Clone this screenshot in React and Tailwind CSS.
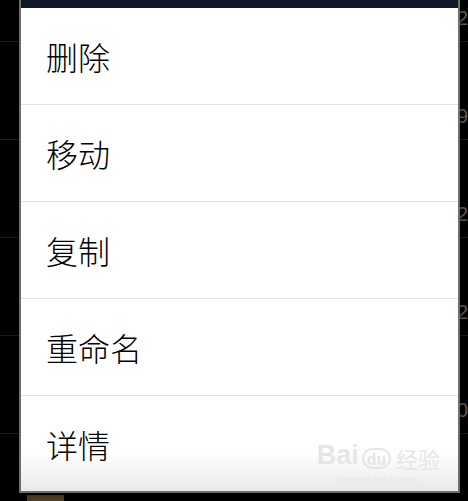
import React from 'react';

const items = ['删除', '移动', '复制', '重命名', '详情'];
const sideDigits = ['2', '9', '2', '2', '0'];

export default function App() {
  return (
    <div className="relative w-[468px] h-[501px] overflow-hidden bg-black" style={{ fontFamily: '"Noto Sans CJK SC", "Noto Sans", sans-serif' }}>
      {/* list behind the dialog */}
      <div className="flex flex-col pt-[41px]">
        {sideDigits.map((d, i) => (
          <div key={i} className="h-[98px] border-t border-[#1c1c1c]" />
        ))}
      </div>
      <div className="absolute left-[457px] top-0 flex flex-col">
        {sideDigits.map((d, i) => (
          <div key={i} className="h-[98px] pt-[8px] text-[20px] leading-none text-[#5a5a5a]" style={{ fontFamily: '"Liberation Sans", sans-serif' }}>
            {d}
          </div>
        ))}
      </div>
      <div className="absolute left-[27px] top-[495px] w-[37px] h-[6px] bg-[#4d3f24]" />

      {/* dialog */}
      <div className="absolute left-[19px] top-0 w-[441px] border-x-2 border-b-2 border-[#6e6e6e] bg-white shadow-[0_2px_4px_rgba(0,0,0,0.5)]">
        <div className="h-[8px] bg-[#121a27]" />
        {items.map((label, i) => (
          <div
            key={label}
            className={`flex items-center pl-[25px] ${i < items.length - 1 ? 'h-[97px] border-b border-[#e2e2e2]' : 'h-[95px] bg-gradient-to-b from-white from-60% to-[#e9e9e9]'}`}
          >
            <span className="text-[32px] font-light leading-none text-black">{label}</span>
          </div>
        ))}
        <div className="absolute right-[18px] bottom-[6px] flex flex-col items-center text-[#e6e6e6] select-none">
          <div className="flex items-end gap-[3px]">
            <span className="text-[27px] font-bold leading-none" style={{ fontFamily: '"Liberation Sans", sans-serif' }}>Bai</span>
            <span className="text-[15px] font-bold leading-none rounded-full border-2 border-[#e6e6e6] px-[3px] py-[1px]">du</span>
            <span className="text-[22px] leading-none ml-[2px]">经验</span>
          </div>
          <span className="text-[11px] leading-none mt-[5px]" style={{ fontFamily: '"Liberation Serif", serif' }}>jingyan.baidu.com</span>
        </div>
      </div>
    </div>
  );
}
